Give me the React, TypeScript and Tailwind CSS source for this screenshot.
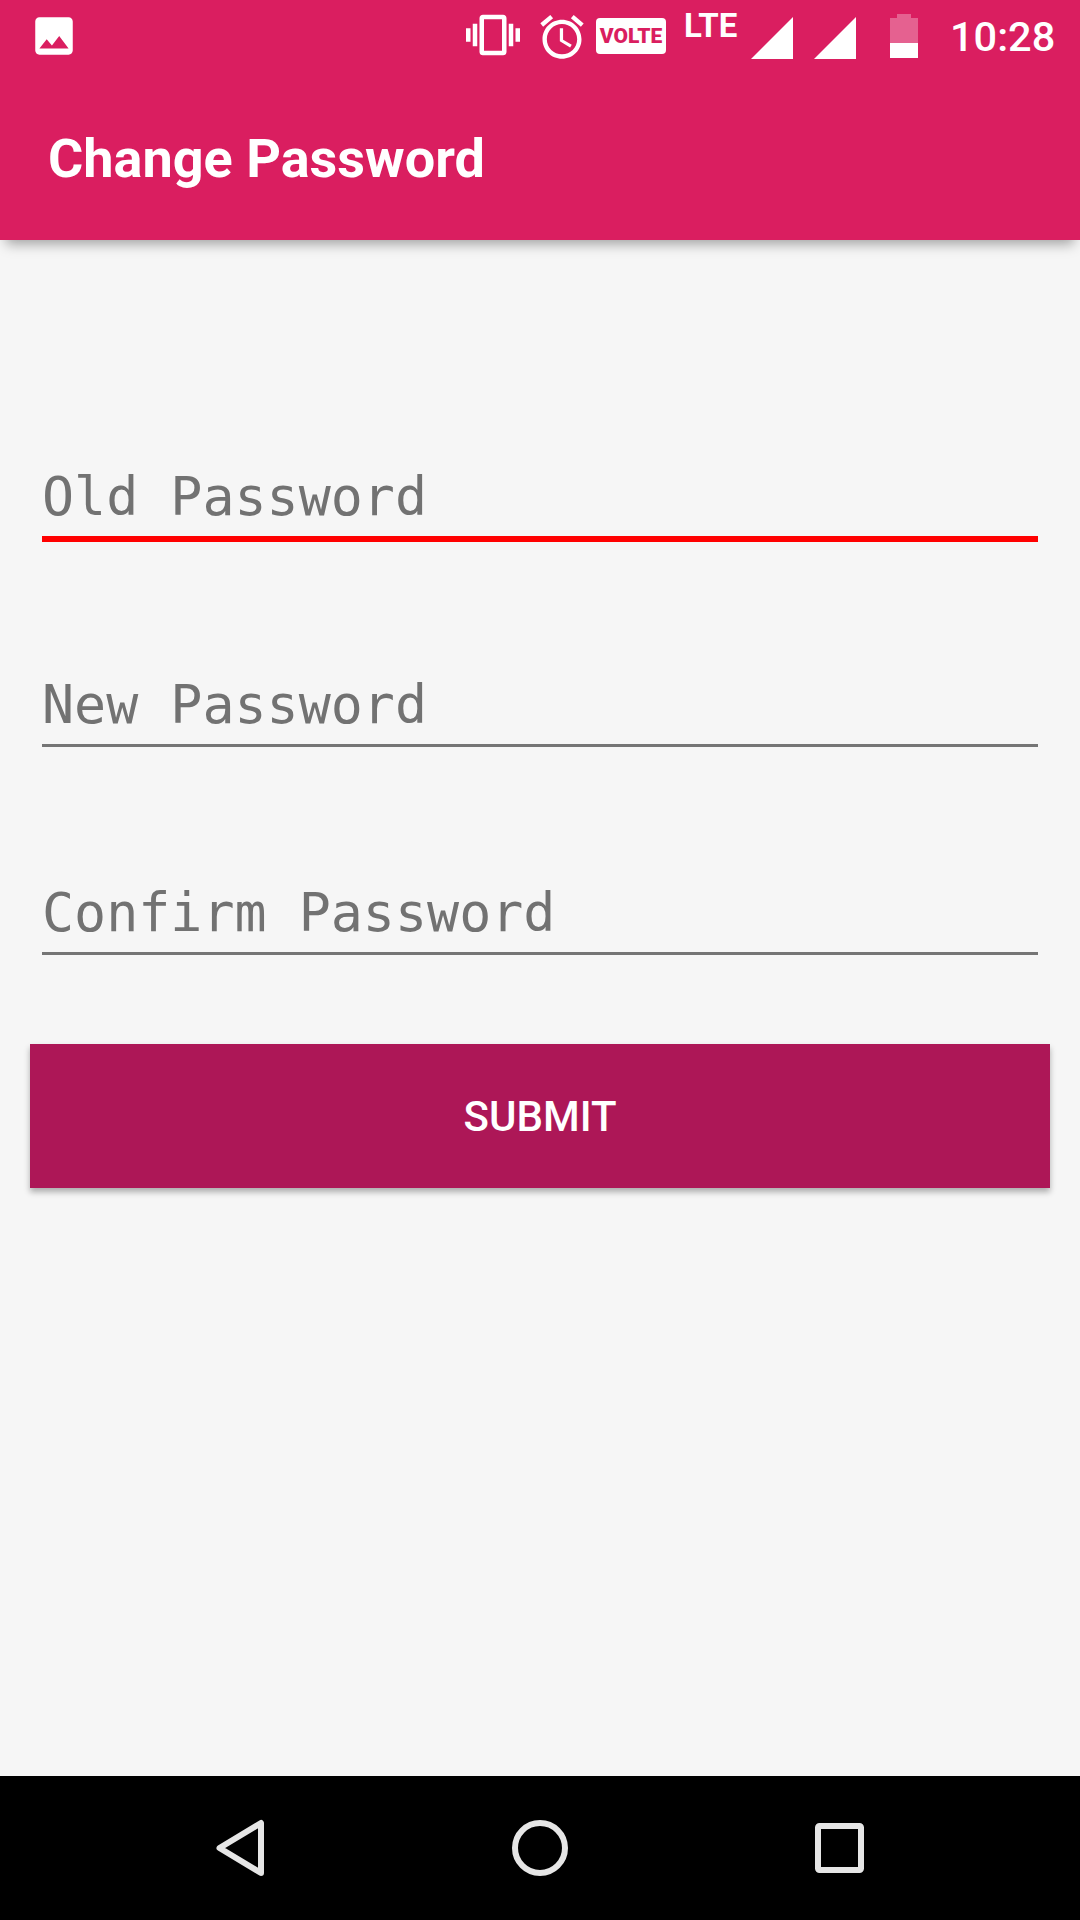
const roboto = "font-['Roboto',sans-serif]";

function StatusBar() {
  return (
    <div className="flex h-[72px] items-start">
      <svg className="ml-[29px] mt-[11px] block h-[50px] w-[50px] shrink-0" viewBox="0 0 24 24" fill="#fff">
        <path d="M21 19V5c0-1.1-.9-2-2-2H5c-1.1 0-2 .9-2 2v14c0 1.1.9 2 2 2h14c1.1 0 2-.9 2-2zM8.5 13.5l2.5 3.01L14.5 12l4.5 6H5l3.5-4.5z" />
      </svg>
      <svg className="ml-[387px] mt-[8px] block h-[54px] w-[54px] shrink-0" viewBox="0 0 24 24" fill="#fff">
        <path d="M0 15h2V9H0v6zm3 2h2V7H3v10zm19-8v6h2V9h-2zm-3 8h2V7h-2v10zM16.5 3h-9C6.67 3 6 3.67 6 4.5v15c0 .83.67 1.5 1.5 1.5h9c.83 0 1.5-.67 1.5-1.5v-15c0-.83-.67-1.5-1.5-1.5zM16 19H8V5h8v14z" />
      </svg>
      <svg className="ml-[16px] mt-[11px] block h-[52px] w-[52px] shrink-0" viewBox="0 0 24 24" fill="#fff">
        <path d="M22 5.72l-4.6-3.86-1.29 1.53 4.6 3.86L22 5.72zM7.88 3.39L6.6 1.86 2 5.71l1.29 1.53 4.59-3.85zM12.5 8H11v6l4.75 2.85.75-1.23-4-2.37V8zM12 4c-4.97 0-9 4.03-9 9s4.03 9 9 9 9-4.03 9-9-4.03-9-9-9zm0 16c-3.87 0-7-3.13-7-7s3.13-7 7-7 7 3.13 7 7-3.13 7-7 7z" />
      </svg>
      <div className="ml-[8px] mt-[18px] flex h-[36px] w-[70px] shrink-0 items-center justify-center rounded-[4px] bg-white">
        <span className={`${roboto} text-[21px] font-black leading-none text-[#da1e60]`}>VOLTE</span>
      </div>
      <span className={`${roboto} ml-[18px] mt-[10px] w-[53px] shrink-0 text-[33px] font-bold leading-[32px] text-white`}>LTE</span>
      <svg className="ml-[14px] mt-[17px] block h-[42px] w-[42px] shrink-0" viewBox="0 0 42 42" fill="#fff">
        <path d="M0 42 42 0v42z" />
      </svg>
      <svg className="ml-[21px] mt-[17px] block h-[42px] w-[42px] shrink-0" viewBox="0 0 42 42" fill="#fff">
        <path d="M0 42 42 0v42z" />
      </svg>
      <svg className="ml-[34px] mt-[14px] block h-[44px] w-[28px] shrink-0" viewBox="0 0 28 44" fill="#fff">
        <path d="M7 0h14v4h7v25H0V4h7z" fillOpacity="0.3" />
        <path d="M0 29h28v15H0z" />
      </svg>
      <span className={`${roboto} ml-[32px] mt-[12px] shrink-0 text-[41.5px] font-medium leading-[50px] text-white`}>10:28</span>
    </div>
  );
}

function Field({ label, active, className }: { label: string; active?: boolean; className: string }) {
  return (
    <div className={className}>
      <div className={`${active ? "h-[78px] border-b-[6px] border-[#ff0000]" : "h-[75px] border-b-[3px] border-[#757575]"} pb-[6px]`}>
        <p className="font-['DejaVu_Sans_Mono',monospace] text-[53.3px] leading-[66px] text-[#727272]">{label}</p>
      </div>
    </div>
  );
}

export default function App() {
  return (
    <div className="flex h-[1920px] w-[1080px] flex-col bg-[#f6f6f6]">
      <header className="relative z-10 h-[240px] bg-[#da1e60] shadow-[0_10px_12px_-6px_rgba(0,0,0,0.35)]">
        <StatusBar />
        <h1 className={`${roboto} pl-[48px] pt-[57px] text-[54px] font-bold leading-[60px] text-white`}>Change Password</h1>
      </header>

      <main className="flex flex-1 flex-col">
        <Field label="Old Password" active className="mx-[42px] mt-[224px]" />
        <Field label="New Password" className="mx-[42px] mt-[130px]" />
        <Field label="Confirm Password" className="mx-[42px] mt-[133px]" />
        <button className={`${roboto} mx-[30px] mt-[89px] h-[144px] bg-[#ad1757] text-[42px] font-medium text-white shadow-[0_4px_6px_rgba(0,0,0,0.3)]`}>
          SUBMIT
        </button>
      </main>

      <nav className="grid h-[144px] grid-cols-3 items-center bg-black px-[90px]">
        <svg className="mx-auto block h-[72px] w-[72px]" viewBox="0 0 72 72" fill="none" stroke="#e6e6e6" strokeWidth="6" strokeLinejoin="round">
          <path d="M15.5 36 57 11v50z" />
        </svg>
        <svg className="mx-auto block h-[72px] w-[72px]" viewBox="0 0 72 72" fill="none" stroke="#e6e6e6" strokeWidth="6">
          <circle cx="36" cy="36" r="25" />
        </svg>
        <svg className="mx-auto block h-[72px] w-[72px]" viewBox="0 0 72 72" fill="none" stroke="#e6e6e6" strokeWidth="6">
          <rect x="14" y="14" width="43" height="44" rx="1.5" />
        </svg>
      </nav>
    </div>
  );
}
